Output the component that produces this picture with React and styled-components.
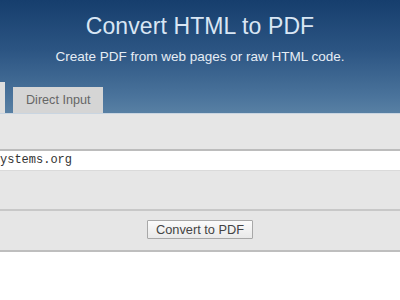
import React from 'react';
import styled, { createGlobalStyle } from 'styled-components';

const Global = createGlobalStyle`
  html, body {
    margin: 0;
    padding: 0;
    background: #fff;
    overflow: hidden;
  }
  body {
    font-family: "Liberation Sans", Arial, sans-serif;
  }
`;

const Page = styled.div`
  width: 400px;
  height: 300px;
  overflow: hidden;
  background: #fff;
`;

const Header = styled.header`
  height: 113px;
  display: flex;
  flex-direction: column;
  align-items: center;
  background: linear-gradient(to bottom, #163e6d 0%, #2c5583 45%, #4a739b 85%, #5880a4 100%);
`;

const Title = styled.h1`
  margin: 12px 0 0;
  font-size: 23px;
  line-height: 28px;
  font-weight: normal;
  color: #d9e6f4;
  letter-spacing: 0.1px;
`;

const Subtitle = styled.p`
  margin: 9px 0 0;
  font-size: 13.5px;
  line-height: 16px;
  color: #e6edf5;
`;

const Tabs = styled.nav`
  margin-top: auto;
  align-self: stretch;
  display: flex;
  align-items: flex-end;
  gap: 8px;
`;

const Tab = styled.div`
  box-sizing: border-box;
  height: ${(p) => (p.$active ? 31 : 26)}px;
  width: ${(p) => (p.$width ? `${p.$width}px` : 'auto')};
  padding: ${(p) => (p.$width ? 0 : '0 13px')};
  overflow: hidden;
  display: flex;
  align-items: center;
  background: ${(p) => (p.$active ? '#dedede' : '#d5d5d5')};
  color: #666;
  font-size: 12.6px;
  white-space: nowrap;
`;

const Rule = styled.div`
  height: 1px;
  background: #c9d5e1;
`;

const Panel = styled.section`
  background: #e6e6e6;
  padding: 35px 0 11px;
  border-bottom: 2px solid #bebebe;
  display: flex;
  flex-direction: column;
`;

const Field = styled.div`
  height: 19px;
  line-height: 19px;
  background: #fff;
  border-top: 2px solid #bcbcbc;
  border-bottom: 1px solid #dadada;
  font-family: "Liberation Mono", "Courier New", monospace;
  font-size: 12px;
  color: #333;
  white-space: nowrap;
  overflow: hidden;
`;

const Divider = styled.hr`
  margin: 38px 0 0;
  border: 0;
  height: 2px;
  background: #c8c8c8;
`;

const Actions = styled.div`
  margin-top: 9px;
  display: flex;
  justify-content: center;
`;

const Button = styled.button`
  box-sizing: border-box;
  height: 19px;
  padding: 0 8px;
  border: 1px solid #a8a8a8;
  border-radius: 1px;
  background: linear-gradient(to bottom, #fbfbfb, #e9e9e9);
  font-family: "Liberation Sans", Arial, sans-serif;
  font-size: 12.8px;
  line-height: 17px;
  color: #444;
`;

export default function App() {
  return (
    <Page>
      <Global />
      <Header>
        <Title>Convert HTML to PDF</Title>
        <Subtitle>Create PDF from web pages or raw HTML code.</Subtitle>
        <Tabs>
          <Tab $active $width={5} />
          <Tab>Direct Input</Tab>
        </Tabs>
      </Header>
      <Rule />
      <Panel>
        <Field>ystems.org</Field>
        <Divider />
        <Actions>
          <Button>Convert to PDF</Button>
        </Actions>
      </Panel>
    </Page>
  );
}
